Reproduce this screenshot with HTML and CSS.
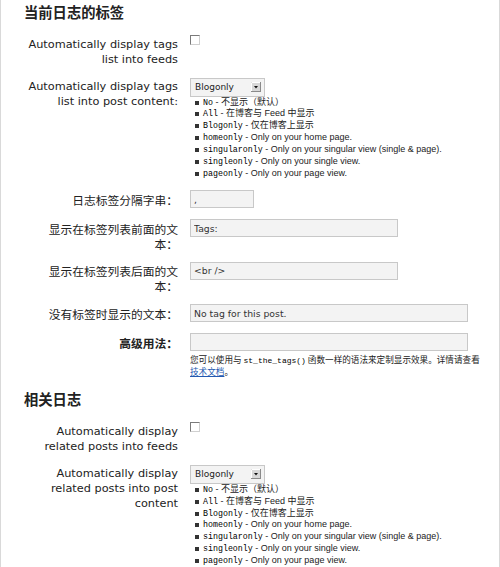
FILE: index.html
```html
<!DOCTYPE html>
<html lang="zh-CN">
<head>
<meta charset="utf-8">
<title>Simple Tags</title>
<link rel="stylesheet" href="styles.css">
</head>
<body>
<div class="page">
  <h2 class="section-title">当前日志的标签</h2>
  <div class="form">
    <div class="row">
      <div class="label">Automatically display tags list into feeds</div>
      <div class="field"><input type="checkbox" class="check"></div>
    </div>
    <div class="row">
      <div class="label">Automatically display tags list into post content:</div>
      <div class="field">
        <div class="select"><span>Blogonly</span><span class="arrow"><svg width="10" height="10" viewBox="0 0 10 10"><rect x="0.5" y="0.5" width="9" height="9" fill="#d8d8d8" stroke="#8a8a8a"/><path d="M0.5 9V0.5H9" fill="none" stroke="#fff"/><path d="M3 4h4L5 6.5z" fill="#111"/></svg></span></div>
        <ul class="opts">
          <li><code>No</code> - 不显示（默认）</li>
          <li><code>All</code> - 在博客与 Feed 中显示</li>
          <li><code>Blogonly</code> - 仅在博客上显示</li>
          <li><code>homeonly</code> - Only on your home page.</li>
          <li><code>singularonly</code> - Only on your singular view (single &amp; page).</li>
          <li><code>singleonly</code> - Only on your single view.</li>
          <li><code>pageonly</code> - Only on your page view.</li>
        </ul>
      </div>
    </div>
    <div class="row">
      <div class="label cjk">日志标签分隔字串：</div>
      <div class="field"><input type="text" class="text w-s" value=","></div>
    </div>
    <div class="row">
      <div class="label cjk">显示在标签列表前面的文本：</div>
      <div class="field"><input type="text" class="text w-m" value="Tags:"></div>
    </div>
    <div class="row">
      <div class="label cjk">显示在标签列表后面的文本：</div>
      <div class="field"><input type="text" class="text w-m" value="&lt;br /&gt;"></div>
    </div>
    <div class="row">
      <div class="label cjk">没有标签时显示的文本：</div>
      <div class="field"><input type="text" class="text w-l" value="No tag for this post."></div>
    </div>
    <div class="row">
      <div class="label cjk strong">高级用法：</div>
      <div class="field">
        <input type="text" class="text w-l" value="">
        <p class="help">您可以使用与 <code>st_the_tags()</code> 函数一样的语法来定制显示效果。详情请查看<a href="#">技术文档</a>。</p>
      </div>
    </div>
  </div>

  <h2 class="section-title second">相关日志</h2>
  <div class="form">
    <div class="row">
      <div class="label">Automatically display related posts into feeds</div>
      <div class="field"><input type="checkbox" class="check"></div>
    </div>
    <div class="row">
      <div class="label">Automatically display related posts into post content</div>
      <div class="field">
        <div class="select"><span>Blogonly</span><span class="arrow"><svg width="10" height="10" viewBox="0 0 10 10"><rect x="0.5" y="0.5" width="9" height="9" fill="#d8d8d8" stroke="#8a8a8a"/><path d="M0.5 9V0.5H9" fill="none" stroke="#fff"/><path d="M3 4h4L5 6.5z" fill="#111"/></svg></span></div>
        <ul class="opts">
          <li><code>No</code> - 不显示（默认）</li>
          <li><code>All</code> - 在博客与 Feed 中显示</li>
          <li><code>Blogonly</code> - 仅在博客上显示</li>
          <li><code>homeonly</code> - Only on your home page.</li>
          <li><code>singularonly</code> - Only on your singular view (single &amp; page).</li>
          <li><code>singleonly</code> - Only on your single view.</li>
          <li><code>pageonly</code> - Only on your page view.</li>
        </ul>
      </div>
    </div>
  </div>
</div>
</body>
</html>
```

FILE: styles.css
```css
* { box-sizing: border-box; }
html, body { margin: 0; background: #fff; }

.page {
  width: 500px;
  min-height: 567px;
  border-left: 1px solid #d9d9d9;
  border-right: 1px solid #d9d9d9;
  padding: 2px 19px 0 23px;
  font-family: "DejaVu Sans", "Noto Sans CJK SC", sans-serif;
  color: #222;
  overflow: hidden;
}

.section-title {
  margin: 0 0 13px;
  font: bold 14.3px/20px "Noto Sans CJK SC", sans-serif;
  color: #222;
}
.section-title.second { margin-top: 12px; }

.form { display: flex; flex-direction: column; gap: 11px; }

.row {
  display: grid;
  grid-template-columns: 154px 1fr;
  column-gap: 12px;
  align-items: start;
}

.label {
  padding: 1.5px 0 0 3px;
  text-align: right;
  font-size: 11.3px;
  line-height: 15px;
  color: #222;
}
.label.cjk { font-size: 11.75px; font-family: "Noto Sans CJK SC", sans-serif; }
.label.strong { font-weight: bold; }

.check {
  appearance: none;
  -webkit-appearance: none;
  display: block;
  width: 10px;
  height: 10px;
  margin: 0;
  border: 1px solid;
  border-color: #7a7a7a #d0d0d0 #d0d0d0 #7a7a7a;
  background: #fff;
}

.text {
  display: block;
  height: 18px;
  margin: 0;
  border: 1px solid #c8c8c8;
  background: #f3f3f3;
  padding: 0 3px;
  font: 9.3px/16px "DejaVu Sans", sans-serif;
  color: #333;
  outline: none;
}
.w-s { width: 64px; }
.w-m { width: 208px; }
.w-l { width: 278px; }

.select {
  display: flex;
  align-items: center;
  justify-content: space-between;
  width: 75px;
  height: 19px;
  border: 1px solid #c8c8c8;
  background: #f3f3f3;
  padding: 0 3px 0 4px;
  font: 9px "DejaVu Sans", sans-serif;
  color: #222;
}
.arrow { display: flex; }

.opts {
  list-style: none;
  margin: 0;
  padding: 0 0 0 13px;
  font: 9px/11.85px "Liberation Sans", "Noto Sans CJK SC", sans-serif;
  color: #222;
  white-space: nowrap;
}
.opts li { position: relative; }
.opts li::before {
  content: "";
  position: absolute;
  left: -8px;
  top: 4px;
  width: 4px;
  height: 4px;
  background: #333;
}

code { font: 8.3px "Liberation Mono", monospace; color: #000; }

.help {
  margin: 2px 0 0;
  font: 8.6px/12px "Noto Sans CJK SC", sans-serif;
  color: #222;
}
.help code { font-size: 8px; }
.help a { color: #2358b0; text-decoration: underline; }
```
